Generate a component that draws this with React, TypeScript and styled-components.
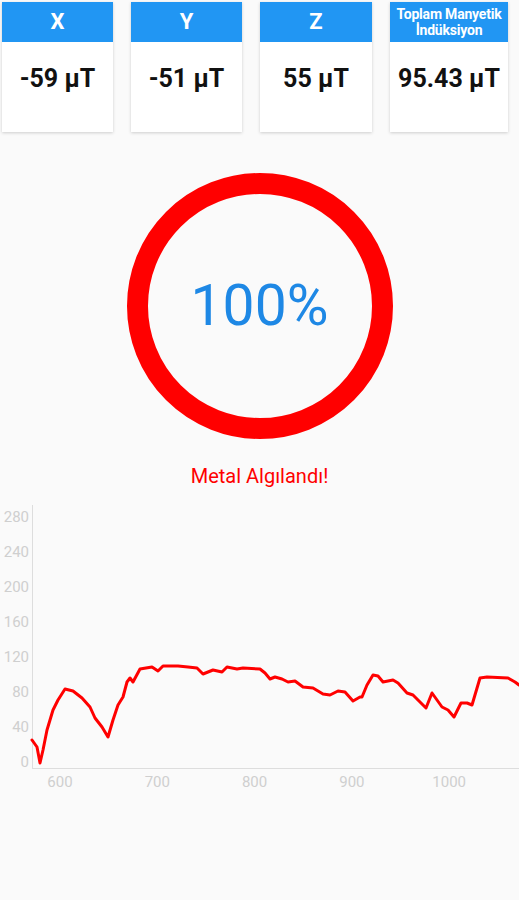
import React from 'react';
import styled, { createGlobalStyle } from 'styled-components';

const GlobalStyle = createGlobalStyle`
    html, body {
        margin: 0;
        padding: 0;
        background: #fafafa;
        font-family: Roboto, "Noto Sans", sans-serif;
    }
`;

interface Axis {
    label: string;
    value: string;
    width: number;
    small?: boolean;
}

const axes: Axis[] = [
    { label: 'X', value: '-59 µT', width: 111 },
    { label: 'Y', value: '-51 µT', width: 111 },
    { label: 'Z', value: '55 µT', width: 112 },
    { label: 'Toplam Manyetik İndüksiyon', value: '95.43 µT', width: 118, small: true },
];

// page coordinates of the trace, read off the reference
const trace: [number, number][] = [
    [32, 740], [37, 747], [40, 763], [43, 750], [47, 730], [53, 710], [58, 700], [65, 689],
    [73, 691], [82, 698], [90, 707], [95, 718], [102, 727], [108, 737], [113, 720], [118, 705],
    [123, 697], [127, 682], [130, 678], [133, 682], [140, 669], [152, 667], [158, 671], [163, 666],
    [178, 666], [188, 667], [197, 668], [203, 674], [213, 670], [222, 672], [227, 667], [237, 669],
    [243, 668], [260, 669], [265, 673], [270, 679], [275, 677], [282, 679], [288, 682], [295, 681],
    [303, 687], [313, 688], [323, 694], [330, 695], [338, 691], [345, 692], [353, 701], [360, 697],
    [362, 697], [367, 685], [373, 675], [378, 676], [383, 682], [393, 680], [398, 683], [407, 693],
    [413, 695], [420, 702], [426, 708], [432, 693], [442, 707], [448, 710], [454, 717], [461, 703],
    [467, 703], [472, 705], [480, 678], [487, 677], [508, 678], [515, 682], [519, 685],
];

const yTicks = [0, 40, 80, 120, 160, 200, 240, 280];
const xTicks = [600, 700, 800, 900, 1000];

const Page = styled.div`
    display: flex;
    flex-direction: column;
    align-items: center;
    min-height: 900px;
`;

const CardRow = styled.div`
    align-self: stretch;
    display: flex;
    gap: 18px;
    padding: 2px 0 0 2px;
`;

const Card = styled.div<{ $width: number }>`
    width: ${p => p.$width}px;
    height: 130px;
    background: #ffffff;
    box-shadow: 0 1px 3px rgba(0, 0, 0, 0.18);
    display: flex;
    flex-direction: column;
`;

const CardHeader = styled.div<{ $small?: boolean }>`
    height: 40px;
    background: #2196f3;
    color: #ffffff;
    font-weight: 700;
    font-size: ${p => (p.$small ? '14px' : '22px')};
    line-height: ${p => (p.$small ? '16px' : '40px')};
    letter-spacing: ${p => (p.$small ? '-0.2px' : '0')};
    white-space: nowrap;
    display: flex;
    align-items: center;
    justify-content: center;
    text-align: center;
`;

const CardValue = styled.div`
    height: 72px;
    display: flex;
    align-items: center;
    justify-content: center;
    font-size: 25px;
    font-weight: 700;
    color: #111111;
`;

const Gauge = styled.div`
    margin-top: 41px;
    width: 266px;
    height: 266px;
    box-sizing: border-box;
    border: 21px solid #ff0000;
    border-radius: 50%;
    display: flex;
    align-items: center;
    justify-content: center;
`;

const Percent = styled.span`
    font-size: 57px;
    color: #1e88e5;
    font-weight: 400;
    margin-top: -2px;
`;

const Status = styled.div`
    margin-top: 26px;
    font-size: 20px;
    line-height: 23px;
    color: #ff0000;
`;

const Chart = styled.svg`
    display: block;
    align-self: stretch;
    margin-top: 7px;
    width: 519px;
    height: 305px;
`;

const label = { fill: '#cfcfcf', fontSize: 15, fontFamily: 'Roboto, sans-serif' };

export default function App() {
    const yOf = (v: number) => 762 - v * 0.875;
    const xOf = (v: number) => 60 + (v - 600) * 0.973;

    return (
        <Page>
            <GlobalStyle />
            <CardRow>
                {axes.map(a => (
                    <Card key={a.label} $width={a.width}>
                        <CardHeader $small={a.small}>
                            {a.small ? <span>Toplam Manyetik<br />İndüksiyon</span> : a.label}
                        </CardHeader>
                        <CardValue>{a.value}</CardValue>
                    </Card>
                ))}
            </CardRow>
            <Gauge>
                <Percent>100%</Percent>
            </Gauge>
            <Status>Metal Algılandı!</Status>
            <Chart viewBox="0 495 519 305">
                <line x1={32.5} y1={505} x2={32.5} y2={768} stroke="#dddddd" strokeWidth={1} />
                <line x1={32} y1={768.5} x2={519} y2={768.5} stroke="#dddddd" strokeWidth={1} />
                {yTicks.map(v => (
                    <text key={v} x={29} y={yOf(v)} textAnchor="end" dominantBaseline="central" {...label}>
                        {v}
                    </text>
                ))}
                {xTicks.map(v => (
                    <text key={v} x={xOf(v)} y={782} textAnchor="middle" dominantBaseline="central" {...label}>
                        {v}
                    </text>
                ))}
                <polyline
                    points={trace.map(p => p.join(',')).join(' ')}
                    fill="none"
                    stroke="#ff0000"
                    strokeWidth={3}
                    strokeLinejoin="round"
                    strokeLinecap="round"
                />
            </Chart>
        </Page>
    );
}
